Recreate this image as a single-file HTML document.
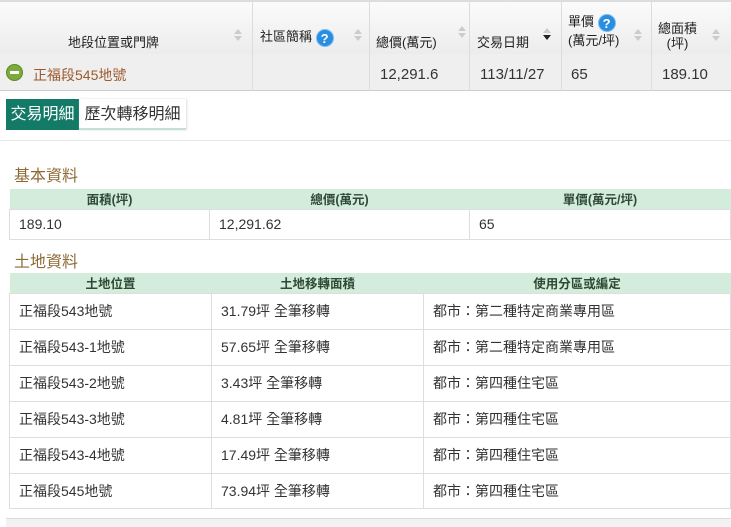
<!DOCTYPE html>
<html><head><meta charset="utf-8"><style>
*{margin:0;padding:0;box-sizing:border-box}
body{width:731px;height:527px;overflow:hidden;background:#fff;font-family:"Liberation Sans","Noto Sans CJK TC",sans-serif;color:#333;position:relative}
.a{position:absolute}
.hd{position:absolute;top:2px;height:52px;background:linear-gradient(#fbfbfb,#ececec);border-right:1px solid #dcdcdc;font-size:13px;color:#222}
.dr{position:absolute;top:54px;height:37px;background:#efefef;border-right:1px solid #dcdcdc;border-bottom:1px solid #ccc;font-size:15px;line-height:42px;color:#333}
.sort{position:absolute;width:0;height:0;border-left:4px solid transparent;border-right:4px solid transparent}
.q{display:inline-block;width:18px;height:18px;border-radius:50%;background:#2a8ee0;color:#fff;font-size:13px;font-weight:bold;text-align:center;line-height:18px;border:1px solid #7bbdf0;vertical-align:middle}
table{position:absolute;border-collapse:collapse;font-size:14px}
th{background:#d3ecdb;color:#2d4a36;font-weight:bold;font-size:12.5px;height:20px}
td{border:1px solid #dedede;padding-left:9px;color:#333}
.t{position:absolute;left:14px;font-size:16px;color:#8d6a35}
</style></head><body>
<div class="a" style="left:0;top:0;width:731px;height:2px;background:#ddd"></div>
<div class="hd" style="left:0;width:253px"><span class="a" style="left:68px;top:30px">地段位置或門牌</span><i class="sort" style="left:234px;top:27px;border-bottom:5px solid #ccc"></i><i class="sort" style="left:234px;top:34px;border-top:5px solid #ccc"></i></div>
<div class="hd" style="left:253px;width:117px"><span class="a" style="left:7px;top:24px">社區簡稱 <span class="q">?</span></span><i class="sort" style="left:101px;top:27px;border-bottom:5px solid #ccc"></i><i class="sort" style="left:101px;top:34px;border-top:5px solid #ccc"></i></div>
<div class="hd" style="left:370px;width:100px"><span class="a" style="left:6px;top:30px">總價(萬元)</span><i class="sort" style="left:88px;top:24px;border-bottom:5px solid #ccc"></i><i class="sort" style="left:88px;top:31px;border-top:5px solid #ccc"></i></div>
<div class="hd" style="left:470px;width:92px"><span class="a" style="left:7px;top:30px">交易日期</span><i class="sort" style="left:73px;top:26px;border-bottom:5px solid #ccc"></i><i class="sort" style="left:73px;top:33px;border-top:5px solid #222"></i></div>
<div class="hd" style="left:562px;width:90px"><span class="a" style="left:6px;top:11px;line-height:17px">單價 <span class="q">?</span><br>(萬元/坪)</span><i class="sort" style="left:72px;top:27px;border-bottom:5px solid #ccc"></i><i class="sort" style="left:72px;top:34px;border-top:5px solid #ccc"></i></div>
<div class="hd" style="left:652px;width:79px;border-right:0"><span class="a" style="left:6px;top:19px;line-height:15px;text-align:center">總面積<br>(坪)</span><i class="sort" style="left:60px;top:27px;border-bottom:5px solid #ccc"></i><i class="sort" style="left:60px;top:34px;border-top:5px solid #ccc"></i></div>
<div class="dr" style="left:0;width:253px"><span class="a" style="left:6px;top:10px;width:17px;height:17px;border-radius:50%;background:#7cab3c;border:1px solid #5e8a2a"></span><span class="a" style="left:10px;top:17px;width:9px;height:3px;background:#fff"></span><span class="a" style="left:33px;top:0;color:#9b5a2e;font-size:14px">正福段545地號</span></div>
<div class="dr" style="left:253px;width:117px"></div>
<div class="dr" style="left:370px;width:100px"><span class="a" style="left:10px">12,291.6</span></div>
<div class="dr" style="left:470px;width:92px"><span class="a" style="left:10px">113/11/27</span></div>
<div class="dr" style="left:562px;width:90px"><span class="a" style="left:9px">65</span></div>
<div class="dr" style="left:652px;width:79px;border-right:0"><span class="a" style="left:10px">189.10</span></div>
<div class="a" style="left:6px;top:99px;width:73px;height:31px;background:#127a67;color:#fff;font-size:16px;line-height:31px;text-align:center">交易明細</div>
<div class="a" style="left:79px;top:99px;width:107px;height:31px;background:#fff;color:#333;font-size:16px;line-height:31px;text-align:center;border-bottom:2px solid #c6dfd6;box-shadow:1px 0 2px #ddd">歷次轉移明細</div>
<div class="a" style="left:0;top:140px;width:731px;height:1px;background:#e6e6e6"></div>
<div class="t" style="top:162px">基本資料</div>
<table style="left:9px;top:189px;width:722px">
<tr><th style="width:200px">面積(坪)</th><th style="width:260px">總價(萬元)</th><th>單價(萬元/坪)</th></tr>
<tr style="height:30px"><td>189.10</td><td>12,291.62</td><td>65</td></tr></table>
<div class="t" style="top:248px">土地資料</div>
<table style="left:9px;top:273px;width:722px">
<tr><th style="width:202px">土地位置</th><th style="width:212px">土地移轉面積</th><th>使用分區或編定</th></tr>
<tr style="height:36px"><td>正福段543地號</td><td>31.79坪 全筆移轉</td><td>都市：第二種特定商業專用區</td></tr>
<tr style="height:36px"><td>正福段543-1地號</td><td>57.65坪 全筆移轉</td><td>都市：第二種特定商業專用區</td></tr>
<tr style="height:36px"><td>正福段543-2地號</td><td>3.43坪 全筆移轉</td><td>都市：第四種住宅區</td></tr>
<tr style="height:36px"><td>正福段543-3地號</td><td>4.81坪 全筆移轉</td><td>都市：第四種住宅區</td></tr>
<tr style="height:36px"><td>正福段543-4地號</td><td>17.49坪 全筆移轉</td><td>都市：第四種住宅區</td></tr>
<tr style="height:35px"><td>正福段545地號</td><td>73.94坪 全筆移轉</td><td>都市：第四種住宅區</td></tr></table>
<div class="a" style="left:6px;top:518px;width:725px;height:9px;background:#f2f2f2;border-top:1px solid #ddd"></div>
</body></html>
